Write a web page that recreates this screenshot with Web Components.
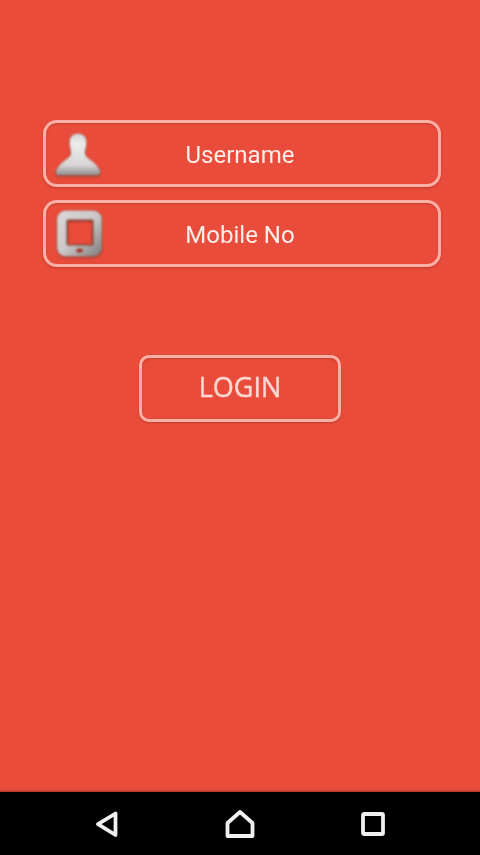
<!DOCTYPE html>
<html>
<head>
<meta charset="utf-8">
<title>Login</title>
<style>
	html, body{
		margin: 0;
		height: 100%;
		background: #e94c3b;
	}
</style>
</head>
<body>

<template id="login_field_tpl">
	<style>
		:host{
			display: block;
			box-sizing: border-box;
			height: 67px;
			border: 3px solid #fbb0a5;
			border-radius: 14px;
			box-shadow: 0 1px 2px rgba(150,40,30,.5), inset 0 1px 2px rgba(150,40,30,.45);
			color: #fdeeea;
			font-family: "Roboto", "Liberation Sans", sans-serif;
			font-size: 24px;
		}
		.row{
			display: grid;
			grid-template-columns: 62px 1fr 62px;
			align-items: center;
			height: 100%;
		}
		.icon{
			display: flex;
			justify-content: center;
			margin-left: 4px;
		}
		.label{
			text-align: center;
			padding: 2px 4px 0 0;
			filter: blur(.6px);
		}
	</style>
	<div class="row">
		<div class="icon"><slot name="icon"></slot></div>
		<div class="label"><slot></slot></div>
	</div>
</template>

<template id="login_button_tpl">
	<style>
		:host{
			display: flex;
			align-items: center;
			justify-content: center;
			box-sizing: border-box;
			width: 202px;
			height: 67px;
			border: 3px solid #fbb0a5;
			border-radius: 10px;
			box-shadow: 0 1px 2px rgba(150,40,30,.5), inset 0 1px 2px rgba(150,40,30,.45);
			color: #fcd8d2;
			font-family: "Open Sans", "Liberation Sans", sans-serif;
			font-size: 27px;
		}
		span{
			padding-bottom: 4px;
			filter: blur(.6px);
			-webkit-text-stroke: .4px #fcd8d2;
		}
	</style>
	<span><slot></slot></span>
</template>

<template id="nav_bar_tpl">
	<style>
		:host{
			display: flex;
			align-items: center;
			justify-content: space-between;
			box-sizing: border-box;
			height: 63px;
			padding: 0 94px 0 95px;
			background: #000;
			box-shadow: 0 -1px 2px rgba(110,30,20,.6);
			flex: none;
		}
		svg{
			display: block;
			fill: none;
			stroke: #f0f0f0;
			stroke-width: 3.8;
			stroke-linejoin: round;
			filter: blur(.7px);
		}
	</style>
	<svg width="24" height="28" viewBox="0 0 24 28"><path d="M20.5 3.5V25L3 14.2Z"/></svg>
	<svg width="30" height="28" viewBox="0 0 30 28"><path d="M15 2 27.5 13V26H2.5V13Z"/></svg>
	<svg width="26" height="26" viewBox="0 0 26 26"><rect x="3" y="3" width="20" height="20" rx="1"/></svg>
</template>

<template id="login_screen_tpl">
	<style>
		:host{
			display: flex;
			flex-direction: column;
			height: 100vh;
			background: #e94c3b;
		}
		.content{
			flex: 1;
			display: flex;
			flex-direction: column;
			padding: 120px 39px 0 43px;
		}
		.fields{
			display: flex;
			flex-direction: column;
			gap: 13px;
		}
		.action{
			display: flex;
			justify-content: center;
			margin: 88px 0 0 -4px;
		}
	</style>
	<div class="content">
		<div class="fields"><slot name="fields"></slot></div>
		<div class="action"><slot name="action"></slot></div>
	</div>
	<slot name="nav"></slot>
</template>

<login-screen>
	<div slot="fields" style="display:contents">
		<login-field>
			<svg slot="icon" width="48" height="48" viewBox="0 0 48 48" style="filter:blur(.8px) drop-shadow(0 1px 1px rgba(110,30,20,.6))">
				<defs>
					<linearGradient id="person_fill" x1="0" y1="0" x2="0" y2="1">
						<stop offset="0" stop-color="#d4d4d4"/>
						<stop offset=".25" stop-color="#ececec"/>
						<stop offset=".75" stop-color="#d8d6d6"/>
						<stop offset="1" stop-color="#8f8b8b"/>
					</linearGradient>
				</defs>
				<path fill="url(#person_fill)" d="M23 3.500C28 3.500 31.500 7 31.500 12C31.500 16 30.500 19.500 30 22C30 25 31 27 35 29.500C39 32 43 36 45 40.500C46 43 44.500 45.500 42 45.500H4C1.500 45.500 0 43 1 40.500C3 36 7 32 11 29.500C15 27 16 25 16 22C15.500 19.500 14.500 16 14.500 12C14.500 7 18 3.500 23 3.500Z"/>
			</svg>
			Username
		</login-field>
		<login-field>
			<svg slot="icon" width="48" height="48" viewBox="0 0 48 48" style="filter:blur(.8px) drop-shadow(0 1px 1px rgba(110,30,20,.6))">
				<defs>
					<linearGradient id="tablet_fill" x1="0" y1="0" x2="1" y2="1">
						<stop offset="0" stop-color="#dbd8d7"/>
						<stop offset=".5" stop-color="#cbc8c8"/>
						<stop offset="1" stop-color="#7f7a79"/>
					</linearGradient>
				</defs>
				<g transform="translate(1 0)">
					<path fill="url(#tablet_fill)" fill-rule="evenodd" d="M10 .5H37C42 .5 46 4.500 46 9.500V37.500C46 42.500 42 46.500 37 46.500H10C5 46.500 1 42.500 1 37.500V9.500C1 4.500 5 .5 10 .5ZM12 10C11.500 10 11 10.500 11 11V34C11 34.500 11.500 35 12 35H36C36.500 35 37 34.500 37 34V11C37 10.500 36.500 10 36 10Z"/>
					<rect x="11" y="10" width="26" height="25" rx="1" fill="none" stroke="#7d5149" stroke-width="1.200"/>
					<ellipse cx="23.500" cy="40.500" rx="3.200" ry="2" fill="#a02c25"/>
				</g>
			</svg>
			Mobile No
		</login-field>
	</div>
	<login-button slot="action">LOGIN</login-button>
	<nav-bar slot="nav"></nav-bar>
</login-screen>

<script>
	(function(){
		'use strict';

		// every element here is just its template in an open shadow root
		function define(name, tplId){
			const tpl = document.getElementById(tplId);
			customElements.define(name, class extends HTMLElement {
				constructor(){
					super();
					const shadow = this.attachShadow({mode:'open'});
					shadow.appendChild(document.importNode(tpl.content, true));
				}
			});
		}

		define('login-field', 'login_field_tpl');
		define('login-button', 'login_button_tpl');
		define('nav-bar', 'nav_bar_tpl');
		define('login-screen', 'login_screen_tpl');
	})();
</script>
</body>
</html>
